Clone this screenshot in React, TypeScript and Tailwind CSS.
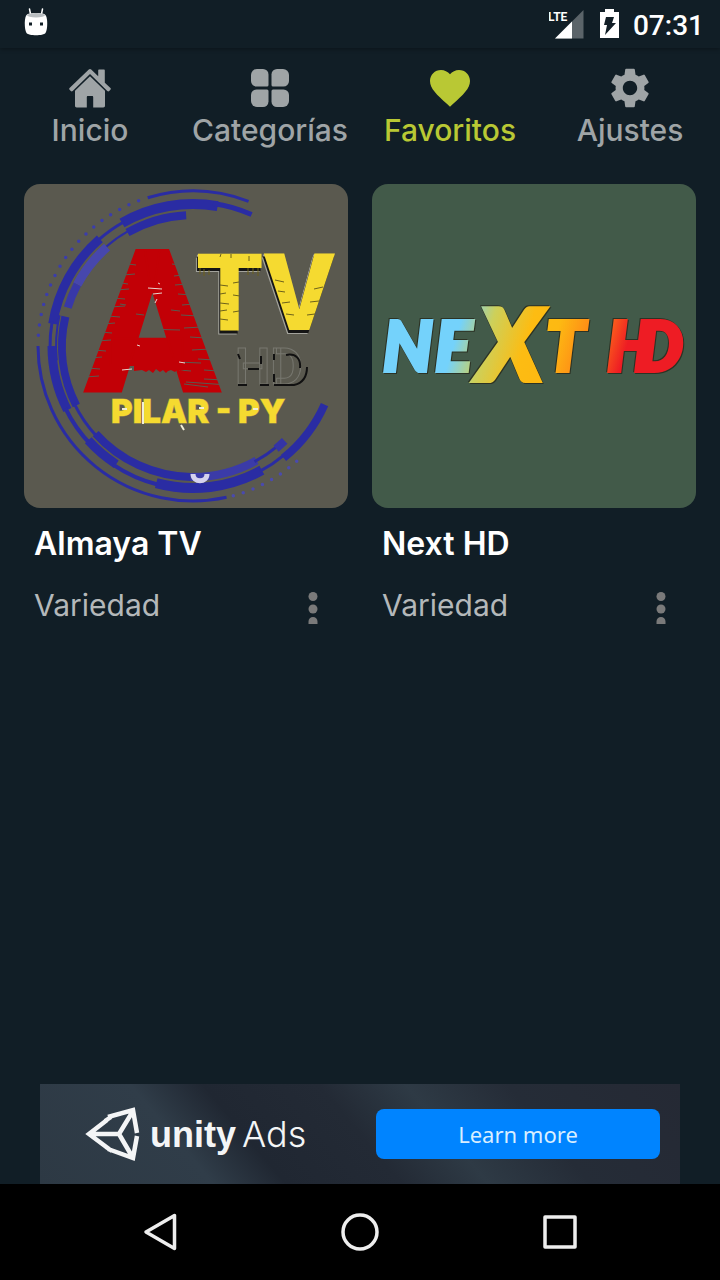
import React from 'react';
import { MdFavorite, MdSettings } from 'react-icons/md';

interface TabItem {
  label: string;
  icon: React.ReactNode;
  active?: boolean;
}

interface ChannelCardProps {
  name: string;
  category: string;
  artClass: string;
  art: React.ReactNode;
}

const HomeIcon = () => (
  <svg viewBox="0 0 48 48" className="w-12 h-12" fill="currentColor" aria-hidden="true">
    <path d="M22.8 5.6a1.8 1.8 0 0 1 2.4 0l7 6.6V6.4c0-.6.4-1 1-1h4.6c.6 0 1 .4 1 1v12.3l5.4 5c.8.8.8 1.2.2 2l-1.2 1.4c-.6.6-1.2.6-1.9 0L24 10.1 6.7 27.1c-.7.6-1.3.6-1.9 0l-1.2-1.4c-.6-.8-.6-1.2.2-2z" />
    <path d="M24 12.2 39 26.7v15.1c0 1-.7 1.7-1.7 1.7H27.2V33.2c0-.7-.4-1.1-1.1-1.1h-4.2c-.7 0-1.1.4-1.1 1.1v10.3H10.7c-1 0-1.7-.7-1.7-1.7V26.7z" />
  </svg>
);

const GridIcon = () => (
  <svg viewBox="0 0 48 48" className="w-12 h-12" fill="currentColor" aria-hidden="true">
    <path d="M11 5h6a5.5 5.5 0 0 1 5.5 5.500V21a1.500 1.500 0 0 1-1.500 1.500H10.500A5.500 5.500 0 0 1 5 17v-6a6 6 0 0 1 6-6z" />
    <path d="M31 5h6a6 6 0 0 1 6 6v6a5.500 5.500 0 0 1-5.500 5.500H27a1.500 1.500 0 0 1-1.500-1.500V10.500A5.500 5.500 0 0 1 31 5z" />
    <path d="M10.500 25.500H21a1.500 1.500 0 0 1 1.500 1.500v10.500A5.500 5.500 0 0 1 17 43h-6a6 6 0 0 1-6-6v-6a5.500 5.500 0 0 1 5.500-5.500z" />
    <path d="M27 25.500h10.500A5.500 5.500 0 0 1 43 31v6a6 6 0 0 1-6 6h-6a5.500 5.500 0 0 1-5.500-5.500V27a1.500 1.500 0 0 1 1.500-1.500z" />
  </svg>
);

const tabs: TabItem[] = [
  { label: 'Inicio', icon: <HomeIcon /> },
  { label: 'Categorías', icon: <GridIcon /> },
  { label: 'Favoritos', icon: <MdFavorite className="w-12 h-12" />, active: true },
  { label: 'Ajustes', icon: <MdSettings className="w-12 h-12" /> },
];

const StatusBar = () => (
  <header className="h-12 px-4 flex items-center justify-between text-white shadow-[0_1px_4px_rgba(0,0,0,0.35)]">
    <svg viewBox="0 0 40 48" className="w-10 h-12" aria-hidden="true">
      <path d="M13.500 9l1 5M26.500 9l-1 5" stroke="#fff" strokeWidth="1.500" strokeLinecap="round" />
      <path d="M11 14.500C14 12.500 26 12.500 29 14.500c3 2 2.800 15 .5 18.500-2 3-17 3-19 0-2.300-3.500-2.500-16.500.5-18.500z" fill="#fff" />
      <ellipse cx="20" cy="15.300" rx="9" ry="2.200" fill="#b9bec1" />
      <path d="M13 22.500h3v3h-3zM24 22.500h3v3h-3z" fill="#111e26" />
    </svg>
    <div className="flex items-center">
      <svg viewBox="0 0 40 48" className="w-10 h-12">
        <path d="M34.500 10v28.500H6z" fill="#5b6469" />
        <path d="M23 21.500v17H6z" fill="#fff" />
        <text x="-1" y="21" fontSize="12" fontWeight="700" fontFamily="Roboto, sans-serif" fill="#fff">LTE</text>
      </svg>
      <svg viewBox="0 0 40 48" className="w-10 h-12" aria-hidden="true">
        <path d="M16 9h9v3h5v26H11V12h5z" fill="#fff" />
        <path d="M17 17h8l-2 6h4l-11 12 2-10h-3z" fill="#111e26" />
      </svg>
      <time className="pl-1 pt-1 text-[28px] leading-11 font-medium font-[Roboto,sans-serif]">07:31</time>
    </div>
  </header>
);

const TabBar = () => (
  <nav className="grid grid-cols-4 h-28 pt-4">
    {tabs.map((tab) => (
      <button
        key={tab.label}
        type="button"
        aria-current={tab.active ? 'page' : undefined}
        className={`flex flex-col items-center text-3xl font-medium ${tab.active ? 'text-[#b9c834]' : 'text-[#9fa4a6]'}`}
      >
        {tab.icon}
        <span className="leading-9">{tab.label}</span>
      </button>
    ))}
  </nav>
);

interface ArcProps {
  r: number;
  from: number;
  to: number;
  width: number;
  color?: string;
  dashed?: boolean;
}

// ring segment around (169, 162), angles in degrees going clockwise
const Arc = ({ r, from, to, width, color = '#2a2ca3', dashed }: ArcProps) => {
  const point = (deg: number) => {
    const a = (deg * Math.PI) / 180;
    return `${169 + r * Math.cos(a)} ${162 + r * Math.sin(a)}`;
  };
  return (
    <path
      d={`M${point(from)}A${r} ${r} 0 0 1 ${point(to)}`}
      fill="none"
      stroke={color}
      strokeWidth={width}
      strokeDasharray={dashed ? '0 10.4' : undefined}
      strokeLinecap={dashed ? 'round' : 'butt'}
    />
  );
};

const ringSegments: ArcProps[] = [
  { r: 155, from: 253, to: 291, width: 3 },
  { r: 155, from: 77.5, to: 180, width: 3 },
  { r: 155, from: 184, to: 253, width: 3.5, dashed: true, color: '#3b3dab' },
  { r: 155, from: 48, to: 76, width: 3.5, dashed: true, color: '#4a4aae' },
  { r: 142, from: 240, to: 280, width: 10 },
  { r: 144, from: 278, to: 294, width: 5 },
  { r: 142, from: 228, to: 241, width: 3 },
  { r: 142, from: 189, to: 229, width: 9 },
  { r: 143, from: 179, to: 190, width: 3 },
  { r: 137, from: 174, to: 193, width: 2 },
  { r: 141, from: 153, to: 180, width: 9 },
  { r: 142, from: 136, to: 154, width: 4 },
  { r: 141, from: 123, to: 138, width: 9 },
  { r: 143, from: 104, to: 124, width: 4 },
  { r: 142, from: 61, to: 105, width: 10 },
  { r: 142, from: 50, to: 62, width: 3 },
  { r: 144, from: 24, to: 51, width: 8 },
  { r: 131, from: 240, to: 267, width: 8 },
  { r: 132, from: 228, to: 241, width: 2 },
  { r: 131, from: 208, to: 229, width: 9, color: '#4747ad' },
  { r: 131, from: 197, to: 208, width: 8, color: '#3838a8' },
  { r: 131, from: 153, to: 193, width: 8 },
  { r: 132, from: 137, to: 154, width: 3 },
  { r: 131, from: 91, to: 138, width: 8 },
  { r: 131, from: 61, to: 91, width: 8, color: '#3b3ba8' },
  { r: 131, from: 50, to: 62, width: 3 },
  { r: 132, from: 46, to: 51, width: 8, color: '#3434a6' },
];

const AlmayaArt = () => (
  <svg viewBox="0 0 324 324" className="w-full h-full" fontFamily="Roboto, sans-serif" fontWeight="900">
    {ringSegments.map((segment, index) => (
      <Arc key={index} {...segment} />
    ))}
    <path d="M169 290c0 9 14 9 14 0" fill="none" stroke="#d5d2ee" strokeWidth="5" />
    <text x="61" y="207" fontSize="198" fill="#c20006" stroke="#c20006" strokeWidth="2">A</text>
    {/* scratches over the letter */}
    <path
      d="M104 80l8 1M99 91l12-1M97 99l7 1M92 106l13-1M89 114l12 1M86 123l15-1M83 132l13 1M79 140l12-1M76 148l12 1M73 157l14-1M69 166l13 1M66 174l12-1M63 184l13 1M61 193l14-1M156 81l-8-1M159 91l-9 1M163 100l-12 1M168 111l-14-1M170 120l-12 1M174 132l-17-1M178 143l-18 1M182 154l-16-1M186 165l-18 1M190 176l-16-1M194 187l-14-1M204 201l-42-3M200 196l-20-1M118 145l38 1M118 150l6 1M112 130l8 1M147 126l9 1M152 178l25 1M96 120l6 1M155 186l12 1M160 200l24 3"
      fill="none"
      stroke="#5a594f"
      strokeWidth="1"
    />
    <path d="M110 174h50v12l-4 1-2-2-3 3-4-2-3 1-2 2-3-3-3 2-4-3-3 4-4-3-3 2-4-2-8 1z" fill="#c20006" />
    <path d="M124 104l14 1M129 110l9-1M133 115l-2 4M98 186l10-1M113 161l3 1M155 178l6 1M134 99l2 1" fill="none" stroke="#e9d6d0" strokeWidth="1" />
    <text y="146" fontSize="107" fill="#f5da30" className="[filter:drop-shadow(-1px_3px_0_#151515)_drop-shadow(-1px_1px_0_#a3a39c)]">
      <tspan x="172">T</tspan>
      <tspan x="240">V</tspan>
    </text>
    <path
      d="M176 90v-6M180 92v-7M185 91v-5M224 91v-7M229 90v-6M234 92v-8M196 101l8 1M196 110l6-1M196 119l9 1M196 127l7-1M196 135l8 1M215 98l-6 1M216 112l-7-1M215 127l-6 1M251 96l9 2M254 107l7 1M258 119l8-1M262 130l8 1M299 103l-9 2M295 117l-9 1M291 130l-8 1M196 73l1-3M207 74v-4M225 77v-5"
      stroke="#6c611b"
      strokeWidth="1"
    />
    <text x="211" y="200" fontSize="50" fontWeight="700" fill="#5a594f" stroke="#77776f" strokeWidth="1">HD</text>
    <path d="M214 201h9M236 201h9M250 201h20c9-2 13-9 13-18M262 171c10-2 15 4 14 13M224 185h11M214 170l2 5M250 170v6M237 172v8M250 190v8" fill="none" stroke="#111" strokeWidth="2" />
    <text x="87" y="239" fontSize="33" fontFamily="Inter, sans-serif" fill="#f5da30" stroke="#a99b45" strokeWidth="1" paintOrder="stroke">PILAR - PY</text>
    <path d="M98 225h5M175 224h5M229 225h5M119 218v22M157 241l3 5" stroke="#f0eed8" strokeWidth="2" />
  </svg>
);

const NextArt = () => (
  <svg viewBox="0 0 324 324" className="w-full h-full" fontFamily="Lato, sans-serif" fontWeight="900" fontStyle="italic">
    <defs>
      <linearGradient id="next-fill" gradientUnits="userSpaceOnUse" x1="20" y1="130" x2="280" y2="210">
        <stop offset="0.250" stopColor="#74d2fb" />
        <stop offset="0.360" stopColor="#cdd05a" />
        <stop offset="0.500" stopColor="#fdbc12" />
        <stop offset="0.600" stopColor="#fdb912" />
        <stop offset="0.750" stopColor="#ff7a18" />
        <stop offset="0.860" stopColor="#ee1c24" />
      </linearGradient>
    </defs>
    <text
      y="187"
      fill="url(#next-fill)"
      stroke="url(#next-fill)"
      strokeWidth="4"
      fontSize="69"
      className="[filter:drop-shadow(1px_1px_0_#2c3325)_drop-shadow(-1px_-1px_0_#2c3325)]"
    >
      <tspan x="11">N</tspan>
      <tspan x="63">E</tspan>
      <tspan x="107" y="196" fontSize="97" strokeWidth="6">X</tspan>
      <tspan x="174" y="187">T</tspan>
      <tspan x="235">H</tspan>
      <tspan x="262">D</tspan>
    </text>
  </svg>
);

const ChannelCard = ({ name, category, artClass, art }: ChannelCardProps) => (
  <article>
    <div className={`aspect-square rounded-2xl overflow-hidden ${artClass}`}>{art}</div>
    <div className="px-[10px] pt-3">
      <h2 className="text-[32px] leading-12 font-semibold text-white">{name}</h2>
      <div className="mt-4 flex items-start justify-between">
        <p className="text-3xl leading-[42px] text-[#b4b8ba]">{category}</p>
        <button type="button" aria-label={`Opciones de ${name}`} className="mt-1 mr-[9px]">
          <svg viewBox="0 0 32 36" className="w-8 h-9" fill="#7a7a7a" aria-hidden="true">
            <circle cx="16" cy="8.500" r="4.500" />
            <circle cx="16" cy="21" r="4.500" />
            <path d="M11.500 36v-2.500a4.500 4.500 0 0 1 9 0V36z" />
          </svg>
        </button>
      </div>
    </div>
  </article>
);

const UnityBanner = () => (
  <aside className="mx-10 h-25 pl-11 pr-5 flex items-center justify-between bg-[linear-gradient(50deg,#2d3944_0%,#303d49_24%,#202732_34%,#232a35_50%,#2e3a45_62%,#252c37_76%,#252934_100%)]">
    <div className="flex items-center gap-2 text-[#f4f5f6] font-['Liberation_Sans',sans-serif]">
      <svg viewBox="0 0 58 56" className="w-[58px] h-14" fill="none" stroke="#f4f5f6" strokeWidth="4.500" aria-hidden="true">
        <path d="M23 14 5 28l20 15M24 11 49 4l4 23M24 43l25 9 4-22M5 28h30M35 28 49 5M35 28l14 24M21 15l6-4M22 41l6 4" />
      </svg>
      <span className="text-4xl"><b>unity</b> <span className="-ml-1 font-light font-[Inter,sans-serif]">Ads</span></span>
    </div>
    <a href="#learn-more" className="w-71 h-[50px] rounded-lg bg-[#0084ff] text-center text-[22px] leading-[50px] text-[#d9eeff] font-['Noto_Sans',sans-serif]">
      Learn more
    </a>
  </aside>
);

const SystemNav = () => (
  <footer className="h-24 px-15 grid grid-cols-3 place-items-center bg-black">
    <button type="button" aria-label="Atrás">
      <svg viewBox="0 0 48 48" className="w-12 h-12" fill="none" stroke="#eee" strokeWidth="3.500" strokeLinejoin="round" aria-hidden="true">
        <path d="M38.500 7.500v33L10 24z" />
      </svg>
    </button>
    <button type="button" aria-label="Inicio del sistema">
      <svg viewBox="0 0 48 48" className="w-12 h-12" fill="none" stroke="#eee" strokeWidth="3.500" aria-hidden="true">
        <circle cx="24" cy="24" r="17" />
      </svg>
    </button>
    <button type="button" aria-label="Recientes">
      <svg viewBox="0 0 48 48" className="w-12 h-12" fill="none" stroke="#eee" strokeWidth="3.500" strokeLinejoin="round" aria-hidden="true">
        <path d="M9 9h30v30H9z" />
      </svg>
    </button>
  </footer>
);

const App: React.FC = () => {
  return (
    <div className="min-h-screen flex flex-col bg-[#111e26] font-[Inter,sans-serif]">
      <StatusBar />
      <TabBar />
      <main className="grow px-6 pt-6 grid grid-cols-2 gap-6 content-start">
        <ChannelCard name="Almaya TV" category="Variedad" artClass="bg-[#5a594f]" art={<AlmayaArt />} />
        <ChannelCard name="Next HD" category="Variedad" artClass="bg-[#425a49]" art={<NextArt />} />
      </main>
      <UnityBanner />
      <SystemNav />
    </div>
  );
};

export default App;
